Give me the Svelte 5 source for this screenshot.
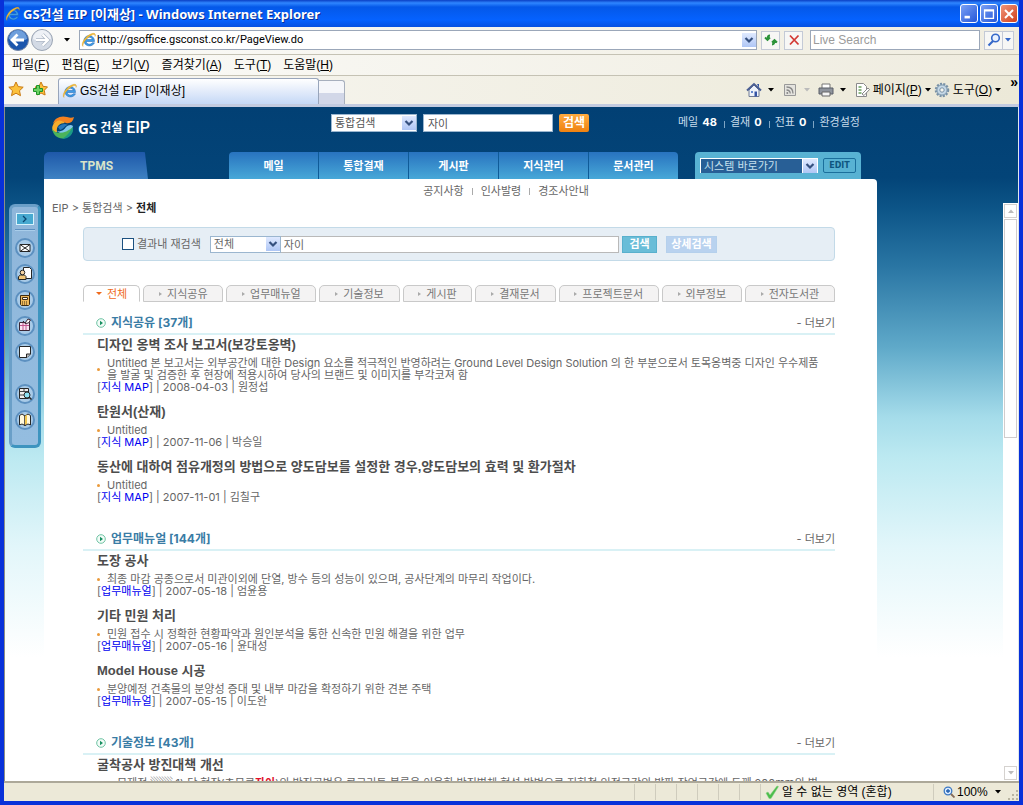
<script lang="ts">
	let scope = $state('통합검색');
	let keyword = $state('자이');
	let innerKeyword = $state('자이');
	let within = $state(false);
	let activeTab = $state('전체');

	const menus = [
		['파일', 'F'], ['편집', 'E'], ['보기', 'V'],
		['즐겨찾기', 'A'], ['도구', 'T'], ['도움말', 'H']
	];
	const counts = [['메일', '48'], ['결재', '0'], ['전표', '0']];
	const nav = ['메일', '통합결재', '게시판', '지식관리', '문서관리'];
	const subnav = ['공지사항', '인사발령', '경조사안내'];
	const tabs = ['전체', '지식공유', '업무매뉴얼', '기술정보', '게시판', '결재문서', '프로젝트문서', '외부정보', '전자도서관'];
	const dock = ['mail', 'contact', 'phone', 'gift', 'note', 'search', 'book'];

	const sections = [
		{
			title: '지식공유', count: 37, source: '지식 MAP',
			items: [
				{
					title: '디자인 옹벽 조사 보고서(보강토옹벽)',
					lines: [
						'Untitled 본 보고서는 외부공간에 대한 Design 요소를 적극적인 반영하려는 Ground Level Design Solution 의 한 부분으로서 토목옹벽중 디자인 우수제품',
						'을 발굴 및 검증한 후 현장에 적용시하여 당사의 브랜드 및 이미지를 부각코져 함'
					],
					date: '2008-04-03', author: '원정섭'
				},
				{ title: '탄원서(산재)', lines: ['Untitled'], date: '2007-11-06', author: '박승일' },
				{
					title: '동산에 대하여 점유개정의 방법으로 양도담보를 설정한 경우,양도담보의 효력 및 환가절차',
					lines: ['Untitled'], date: '2007-11-01', author: '김칠구'
				}
			]
		},
		{
			title: '업무매뉴얼', count: 144, source: '업무매뉴얼',
			items: [
				{
					title: '도장 공사',
					lines: ['최종 마감 공종으로서 미관이외에 단열, 방수 등의 성능이 있으며, 공사단계의 마무리 작업이다.'],
					date: '2007-05-18', author: '엄윤용'
				},
				{
					title: '기타 민원 처리',
					lines: ['민원 접수 시 정확한 현황파악과 원인분석을 통한 신속한 민원 해결을 위한 업무'],
					date: '2007-05-16', author: '윤대성'
				},
				{
					title: 'Model House 시공',
					lines: ['분양예정 건축물의 분양성 증대 및 내부 마감을 확정하기 위한 견본 주택'],
					date: '2007-05-15', author: '이도완'
				}
			]
		}
	];
</script>

{#snippet ie()}
	<svg class="ie" viewBox="0 0 16 16" aria-hidden="true">
		<path d="M13.500 9.500H5.200c.3 3 4.500 3.500 6 1.300h2.300C11.500 15.500 3 15 3 8.600 3 2 13.800 1.800 13.500 9.500ZM5.300 7.500h5.900C10.800 4.600 5.900 4.500 5.300 7.500Z" fill="#3f9be6" stroke="#1763b4" stroke-width=".5" />
		<path d="M2 14.500C-1 12 5 3 11 1.500c3-.8 4 .8 3 3 .2-2-1-2.500-3-1.500C6 5.500 1.500 11 2 14.500Z" fill="#f5bd38" stroke="#c98a12" stroke-width=".3" />
	</svg>
{/snippet}

{#snippet chevron()}
	<svg class="chev" viewBox="0 0 14 14" aria-hidden="true">
		<path d="M3.500 5 7 8.500 10.500 5" fill="none" stroke="#35507f" stroke-width="2.200" />
	</svg>
{/snippet}

{#snippet caret()}
	<svg class="caret" viewBox="0 0 6 4" aria-hidden="true"><path d="M0 0h6L3 3.500z" fill="currentColor" /></svg>
{/snippet}

<div class="window">
	<header class="titlebar">
		{@render ie()}
		<h1>GS건설 EIP [이재상] - Windows Internet Explorer</h1>
		<button class="win" aria-label="최소화"><svg viewBox="0 0 18 18"><path d="M4 12.500h6" stroke="#fff" stroke-width="3" /></svg></button>
		<button class="win" aria-label="최대화"><svg viewBox="0 0 18 18"><path d="M4 4.500h10v9.500H4zM4 5.500h10" fill="none" stroke="#fff" stroke-width="1.500" /></svg></button>
		<button class="win close" aria-label="닫기"><svg viewBox="0 0 18 18"><path d="m4.500 4.500 9 9m0-9-9 9" stroke="#fff" stroke-width="2.200" /></svg></button>
	</header>

	<div class="address">
		<button class="round" aria-label="뒤로">
			<svg viewBox="0 0 22 22">
				<circle cx="11" cy="11" r="10.500" fill="#1d57ad" stroke="#7889a7" />
				<path d="M2 10a9 9 0 0 1 18 0c-5 3-13 3-18 0Z" fill="#6f9fdc" />
				<path d="M10.500 5.500 5 11l5.500 5.500M5.500 11H17" fill="none" stroke="#fff" stroke-width="2.800" />
			</svg>
		</button>
		<button class="round" aria-label="앞으로">
			<svg viewBox="0 0 22 22">
				<circle cx="11" cy="11" r="10.500" fill="#d3dae5" stroke="#9ba5b4" />
				<path d="M2 10a9 9 0 0 1 18 0c-5 3-13 3-18 0Z" fill="#eef1f6" />
				<path d="m11.500 5.500 5.500 5.500-5.500 5.500M16.500 11H5" fill="none" stroke="#aeb8c6" stroke-width="3.600" />
				<path d="m11.500 5.500 5.500 5.500-5.500 5.500M16.500 11H5" fill="none" stroke="#fff" stroke-width="2.200" />
			</svg>
		</button>
		<button class="drop" aria-label="최근 페이지">{@render caret()}</button>
		<label class="url">
			{@render ie()}
			<input value="http://gsoffice.gsconst.co.kr/PageView.do" aria-label="주소" />
			{@render chevron()}
		</label>
		<button class="tool" aria-label="새로 고침">
			<svg viewBox="0 0 16 16"><path d="M7 3.500C4.500 3.500 4.500 5 4.500 7M2 5.500l2.500 2.500L7 5.500M9 12.500c2.500 0 2.500-1.500 2.500-3.500M9 10.500 11.500 8l2.500 2.500" fill="none" stroke="#2c9339" stroke-width="1.800" /></svg>
		</button>
		<button class="tool" aria-label="중지">
			<svg viewBox="0 0 16 16"><path d="m4 3.500 8.500 9M12.500 3.500 4 12.500" stroke="#d33a35" stroke-width="1.800" /></svg>
		</button>
		<input class="live" placeholder="Live Search" aria-label="Live Search" />
		<button class="tool find" aria-label="검색">
			<svg viewBox="0 0 16 16"><circle cx="9.500" cy="6" r="3.800" fill="#e8f1ff" stroke="#3568c9" stroke-width="1.600" /><path d="m7 9-4.500 4.500" stroke="#3568c9" stroke-width="2.200" /></svg>
		</button>
		<button class="tool more" aria-label="검색 옵션">{@render caret()}</button>
	</div>

	<nav class="menubar">
		{#each menus as [label, key]}
			<button>{label}(<u>{key}</u>)</button>
		{/each}
	</nav>

	<div class="tabbar">
		<button class="fav" aria-label="즐겨찾기 센터">
			<svg viewBox="0 0 16 16"><path d="m8 1 2.200 4.600 5 .6-3.700 3.500 1 5L8 12.200 3.500 14.700l1-5L.8 6.200l5-.6z" fill="#fcc13c" stroke="#c97b14" /></svg>
		</button>
		<button class="fav" aria-label="즐겨찾기에 추가">
			<svg viewBox="0 0 16 16"><path d="m9 1 2 4.300 4.500.6-3.200 3.400.8 4.700L9 12l-4 2 .7-5L3 6l4-.7z" fill="#fcc13c" stroke="#c97b14" /><path d="M4.500 4.500h3v3h3v3h-3v3h-3v-3h-3v-3h3z" fill="#6bd164" stroke="#1d9427" /></svg>
		</button>
		<button class="browsertab">{@render ie()} GS건설 EIP [이재상]</button>
		<button class="newtab" aria-label="새 탭"></button>
		<div class="commands">
			<button class="wide" aria-label="홈">
				<svg viewBox="0 0 16 16"><path d="M3 8v6.500h10V8L8 3z" fill="#eef2fa" stroke="#6f7b95" /><path d="M1 8.500 8 2l7 6.500" fill="none" stroke="#4b5f93" stroke-width="2" /><path d="M11 2h2v4M8.500 9.500H11v5H8.500z" fill="#3453a4" /><path d="M5 9h2v2H5z" fill="#6689cd" /></svg>
				{@render caret()}
			</button>
			<button class="wide off" aria-label="피드">
				<svg viewBox="0 0 16 16"><path d="M2.500 2.500h11v11h-11z" fill="#e4e3de" stroke="#999" /><path d="M4.500 5c4 0 6.500 2.500 6.500 6.500M4.500 8c2.500 0 3.700 1.300 3.700 3.500" fill="none" stroke="#888" stroke-width="1.300" /><circle cx="5.300" cy="11" r="1" fill="#888" /></svg>
				{@render caret()}
			</button>
			<button class="wide" aria-label="인쇄">
				<svg viewBox="0 0 16 16"><path d="M4 2h8v5H4z" fill="#fff" stroke="#777" /><path d="M1 6h14v6H1z" fill="#8f949d" stroke="#5a5f69" /><path d="M4 10h8v4H4z" fill="#f4f4f4" stroke="#666" /></svg>
				{@render caret()}
			</button>
			<button>
				<svg viewBox="0 0 16 16"><path d="M2.500 1.500h7l3 3v10h-10z" fill="#fff" stroke="#8a8a8a" /><path d="M4.500 5h3M4.500 8h3M4.500 11h3" stroke="#68a05b" stroke-width="1.500" /><path d="m8 12 6-6 1.500 1.500-5.500 6z" fill="#fff" stroke="#888" /></svg>
				<span>페이지(<u>P</u>)</span>{@render caret()}
			</button>
			<button>
				<svg viewBox="0 0 16 16"><circle cx="8" cy="8" r="6" fill="#b8ccdc" stroke="#7891a6" stroke-width="2.500" stroke-dasharray="2 1.200" /><circle cx="8" cy="8" r="5" fill="#c6d9e8" stroke="#88a1b4" /><circle cx="8" cy="8" r="2.200" fill="#f6f6ef" stroke="#7891a6" /></svg>
				<span>도구(<u>O</u>)</span>{@render caret()}
			</button>
			<b>»</b>
		</div>
	</div>

	<div class="page">
		<div class="top">
			<a class="logo" href="#home">
				<svg viewBox="0 0 24 24" aria-hidden="true">
					<path d="M2 8C3 2 10-1 16 1c3 1 5 1 7 0-1 5-4 7-8 6C10 5 5 4 2 8Z" fill="#f58220" />
					<path d="M2 9c3-6 9-5 12-2-5 0-9 3-8 9-4 2-6-3-4-7Z" fill="#f9ad2b" />
					<path d="M5 14c2 3 8 1 10-3 2-2 5-3 7-1-2 8-12 10-17 4Z" fill="#81c6ec" />
					<path d="M7 11c3-3 7-4 10-2-3 0-4 4-8 5Z" fill="#2a77ba" />
					<path d="M1 12c2 6 12 7 21-1 1 13-19 17-21 1Z" fill="#4bb35c" />
					<path d="M22 11c1 8-5 12-11 12 5-3 7-6 11-12Z" fill="#1a9a87" />
				</svg>
				<b>GS</b><span>건설</span><em>EIP</em>
			</a>
			<form class="gsearch" onsubmit={(e) => e.preventDefault()}>
				<span class="pick">
					<select bind:value={scope} aria-label="검색 범위"><option>통합검색</option></select>
					{@render chevron()}
				</span>
				<input bind:value={keyword} aria-label="검색어" />
				<button>검색</button>
			</form>
			<ul class="counts">
				{#each counts as [label, n]}
					<li><a href="#{label}">{label} <b>{n}</b></a></li>
				{/each}
				<li><a href="#settings">환경설정</a></li>
			</ul>
		</div>

		<div class="gnb">
			<a class="tpms" href="#tpms">TPMS</a>
			<nav>
				{#each nav as label}
					<a href="#{label}">{label}</a>
				{/each}
			</nav>
			<div class="system">
				<span class="pick">
					<select aria-label="시스템 바로가기"><option>시스템 바로가기</option></select>
					{@render chevron()}
				</span>
				<button>EDIT</button>
			</div>
		</div>

		<div class="subnav">
			{#each subnav as label}
				<a href="#{label}">{label}</a>
			{/each}
		</div>

		<div class="frame">
			<aside>
				<div class="dock">
					<button class="toggle" aria-label="펼치기"><svg viewBox="0 0 16 10"><path d="m6 2 3 3-3 3" fill="none" stroke="#0a456e" stroke-width="1.300" /></svg></button>
					<hr />
					{#each dock as name}
						<button class={name} aria-label={name}>
							<svg viewBox="0 0 22 22">
								<circle cx="11" cy="11" r="9" fill="#a9cbe8" stroke="#5c90c0" stroke-width="2" />
								{#if name === 'mail'}
									<path d="M6 7.500h10v7H6zM6 7.500l10 7m0-7-10 7" fill="#fff" stroke="#262626" />
								{:else if name === 'contact'}
									<path d="M9.500 4.500h6l2 2v9h-8z" fill="#fff" stroke="#262626" /><path d="M4.500 16.500v-3l2-1.500h4l1.500 1.500v3z" fill="#f3c879" stroke="#262626" /><circle cx="8.500" cy="9.500" r="2.300" fill="#f7d6a4" stroke="#262626" />
								{:else if name === 'phone'}
									<path d="M15.500 6.500v-3M6.500 6.500h9v9l-1 1h-7l-1-1z" fill="#eeb95c" stroke="#3d2c14" /><path d="M8.500 8.500h5v2h-5z" fill="#fff" stroke="#3d2c14" /><path d="M8 13h6M8 15h6" stroke="#3d2c14" stroke-dasharray="1 1" />
								{:else if name === 'gift'}
									<path d="M5.500 7.500h10v8h-10z" fill="#f8e4f2" stroke="#3a2534" /><path d="M6 10.500h9M9 8v7M12 8v7" stroke="#c2568f" /><path d="m11 8 3-4 2.500 1-2 3-3.500.5L9 6z" fill="#fff" stroke="#3a2534" />
								{:else if name === 'note'}
									<path d="M5.500 5.500h11v7.500L13 16.500H5.500z" fill="#fff" stroke="#262626" /><path d="M12.500 16.500V13h4" fill="#bbb" stroke="#262626" />
								{:else if name === 'search'}
									<path d="M5.500 5.500h9v10h-9z" fill="#eee" stroke="#262626" /><path d="M6 8.500h8M6 12h4M10 6v3" stroke="#444" /><circle cx="13" cy="12" r="3" fill="#8fe2f3" stroke="#262626" /><path d="m15 14 2.500 2.500" stroke="#262626" stroke-width="1.500" />
								{:else}
									<path d="M5.500 6.500 8 5l3 2v9.500L8 15l-2.500 1zM11 7l3-2 2.500 1.500V16L14 15l-3 1.500z" fill="#fff8dd" stroke="#262626" /><path d="m11 7 2-1.500v9.200l-2 1.300z" fill="#f1c64e" />
								{/if}
							</svg>
						</button>
					{/each}
				</div>
			</aside>

			<main>
				<p class="crumb">EIP &gt; 통합검색 &gt; <b>전체</b></p>

				<form class="filter" onsubmit={(e) => e.preventDefault()}>
					<label><input type="checkbox" bind:checked={within} />결과내 재검색</label>
					<span class="pick">
						<select aria-label="분류"><option>전체</option></select>
						{@render chevron()}
					</span>
					<input class="word" bind:value={innerKeyword} aria-label="재검색어" />
					<button>검색</button>
					<button type="button" class="detail">상세검색</button>
				</form>

				<div class="tabs" role="tablist">
					{#each tabs as tab}
						<button role="tab" aria-selected={tab === activeTab} class:active={tab === activeTab} onclick={() => (activeTab = tab)}>
							<i></i>{tab}
						</button>
					{/each}
				</div>

				{#snippet head(title: string, count: number)}
					<div class="head">
						<svg viewBox="0 0 10 10" aria-hidden="true"><circle cx="5" cy="5" r="4.300" fill="#f2fcf7" stroke="#6fc3a4" /><path d="M4 2.700 7 5 4 7.300z" fill="#178f61" /></svg>
						<h2>{title} [{count}개]</h2>
						<a href="#more">- 더보기</a>
					</div>
				{/snippet}

				{#each sections as section}
					<section>
						{@render head(section.title, section.count)}
						{#each section.items as item}
							<article>
								<h3>{item.title}</h3>
								<div class="desc">
									<div>{#each item.lines as line}<p>{line}</p>{/each}</div>
								</div>
								<p class="meta">[<a href="#source">{section.source}</a>] | {item.date} | {item.author}</p>
							</article>
						{/each}
					</section>
				{/each}

				<section>
					{@render head('기술정보', 43)}
					<article>
						<h3>굴착공사 방진대책 개선</h3>
						<div class="desc plain">
							<p>문제점 ▒▒ 1) 당 현장(초무로<strong>자이</strong>)의 방진공법은 콘크리트 블록을 이용한 방진벽체 형성 방법으로 지하철 인접구간의 발파 작업구간에 두께 200mm의 벽</p>
						</div>
					</article>
				</section>
			</main>

			<div class="scroll">
				<button class="up" aria-label="위로">{@render caret()}</button>
				<div class="thumb"></div>
				<button class="down" aria-label="아래로">{@render caret()}</button>
			</div>
		</div>
	</div>

	<footer>
		<div class="cells"><i></i><i></i><i></i><i></i><i></i><i></i></div>
		<div class="zone">
			<svg viewBox="0 0 14 14" aria-hidden="true"><path d="m1 8 2-1 2 3 7-9 1.500.5L6 13.500H4z" fill="#4bbd4b" stroke="#86cf83" stroke-width=".5" /></svg>
			알 수 없는 영역 (혼합)
		</div>
		<button class="zoom">
			<svg viewBox="0 0 12 12" aria-hidden="true"><circle cx="5" cy="5" r="3.800" fill="#dcecff" stroke="#3b78c3" stroke-width="1.300" /><path d="M3 5h4M5 3v4" stroke="#1c5cb0" stroke-width="1.300" /><path d="m8 8 3.500 3.500" stroke="#866b57" stroke-width="1.800" /></svg>
			<span>100%</span>{@render caret()}
		</button>
		<svg class="grip" viewBox="0 0 12 12" aria-hidden="true"><path d="M9 1h2v2H9zM9 5h2v2H9zM5 5h2v2H5zM9 9h2v2H9zM5 9h2v2H5zM1 9h2v2H1z" fill="#b8b4a2" /></svg>
	</footer>
</div>

<style>
	:global(body) { margin: 0; }
	.window {
		box-sizing: border-box; height: 100vh; overflow: hidden;
		display: flex; flex-direction: column;
		border: solid #0831d9; border-width: 0 4px 4px;
		background: #ece9d8; color: #000;
		font: 12px/16px "Liberation Sans", "Noto Sans CJK KR", sans-serif;
	}
	.window :global(*) { box-sizing: border-box; }
	button, input, select { font: inherit; color: inherit; margin: 0; padding: 0; border-radius: 0; }
	button { border: 0; background: none; white-space: nowrap; }
	select { appearance: none; outline: 0; }
	input { outline: 0; min-width: 0; }
	a { color: inherit; text-decoration: none; }
	h1, h2, h3, p, ul { margin: 0; padding: 0; }
	svg { display: block; flex-shrink: 0; }
	.ie { width: 16px; height: 16px; }
	.caret { width: 6px; height: 4px; }
	.chev { width: 14px; height: 14px; background: linear-gradient(#dfe9ff, #afc6f5); }

	.titlebar {
		display: flex; align-items: center; gap: 2px; height: 27px; flex-shrink: 0;
		margin: 0 -4px; padding: 0 5px;
		background: linear-gradient(#0a3fc4, #2f86ff 3px, #0458e8 7px, #0562ff 20px, #0650e0);
	}
	.titlebar h1 {
		flex: 1; color: #fff; font-weight: bold; font-size: 13px; line-height: 16px;
		font-family: "Noto Sans", "Noto Sans CJK KR", sans-serif;
		text-shadow: 1px 1px #0a2f94; white-space: nowrap;
	}
	.win { width: 18px; height: 19px; border: 1px solid #fff; border-radius: 3px; background: linear-gradient(135deg, #7aa1f5, #2456d8); }
	.win svg { width: 16px; height: 16px; }
	.win.close { background: linear-gradient(135deg, #f1957b, #d0401b); }

	.address {
		display: flex; align-items: center; height: 28px; flex-shrink: 0; padding: 0 5px 1px 3px;
		border-bottom: 1px solid #c5c2b4; background: linear-gradient(90deg, #fbfbf9, #f0ede0);
	}
	.round { width: 24px; height: 22px; }
	.round svg { width: 22px; height: 22px; }
	.drop { width: 24px; display: grid; place-items: center; }
	.url {
		flex: 1; display: flex; align-items: center; gap: 0; height: 20px; margin-right: 4px; padding: 0 0 0 1px;
		border: 1px solid #9ba7b9; background: #fff;
	}
	.url input { flex: 1; border: 0; font: 11px/16px Roboto, sans-serif; }
	.tool { display: grid; place-items: center; width: 19px; height: 19px; margin-right: 4px; border: 1px solid #c4cad6; background: #f7f7f5; }
	.tool svg { width: 16px; height: 16px; }
	.live { width: 170px; height: 20px; margin: 0 4px 0 3px; padding: 0 2px; border: 1px solid #9ba7b9; background: #fff; }
	.live::placeholder { color: #9b9b9b; }
	.tool.find { margin: 0; }
	.tool.more { width: 11px; margin: 0; border-left: 0; color: #3568c9; }
	.tool :global(.caret) { width: 6px; height: 4px; }

	.menubar {
		display: flex; gap: 12px; height: 21px; flex-shrink: 0; padding: 0 8px;
		border-bottom: 1px solid #c5c2b4; background: linear-gradient(90deg, #fbfbf9, #efecdf);
	}

	.tabbar {
		display: flex; align-items: flex-end; height: 31px; flex-shrink: 0; padding-left: 4px;
		border-bottom: 3px solid #c3cbe0; background: linear-gradient(90deg, #f8f7f3, #ece9d8);
	}
	.fav { width: 24px; height: 26px; padding-bottom: 4px; }
	.fav svg { width: 16px; height: 16px; }
	.browsertab {
		display: flex; align-items: center; gap: 2px; flex: 0 1 261px; height: 26px; margin-left: 2px; padding: 0 3px 2px;
		border: 1px solid #98a5bb; border-bottom: 0; border-radius: 3px 3px 0 0;
		background: linear-gradient(#fff, #e8effb 40%, #c5d8f6);
	}
	.newtab {
		width: 26px; height: 24px; border: 1px solid #a7afbd; border-bottom: 0; border-left: 0; border-radius: 0 3px 0 0;
		background: linear-gradient(#f5f6fa 50%, #d2d7e8 50%);
	}
	.commands { display: flex; align-items: center; gap: 3px; height: 28px; margin-left: auto; padding: 0 1px; }
	.commands button { display: flex; align-items: center; gap: 3px; }
	.commands .wide { gap: 6px; margin-right: 5px; }
	.commands button > :global(svg:first-child) { width: 16px; height: 16px; }
	.commands .off { color: #bbb; }
	.commands b { align-self: flex-start; margin-left: 6px; font-size: 14px; line-height: 12px; }

	.page {
		flex: 1; min-height: 0; display: flex; flex-direction: column; overflow: hidden;
		border-left: 1px solid #8d8f85; border-right: 1px solid #dfe6ee;
		background: linear-gradient(#024074 0, #034478 70px, #0c5487 100px, #2a76a4 160px, #5fa9c9 240px, #a5dcea 310px, #bce9f1 350px, #e2f6fa 440px, #fff 550px);
		font-family: Inter, "Noto Sans CJK KR", sans-serif; font-size: 11px;
	}
	.top { display: flex; align-items: flex-start; height: 45px; flex-shrink: 0; padding: 7px 0 0 46px; }
	.logo { display: flex; align-items: center; height: 28px; width: 280px; color: #fff; }
	.logo svg { width: 24px; height: 24px; margin-right: 3px; }
	.logo b { margin-right: 3px; font: bold 15px/20px "Open Sans", sans-serif; }
	.logo span { margin-right: 4px; font-size: 12px; font-weight: bold; }
	.logo em { font: 500 16px/20px Roboto, sans-serif; }
	.gsearch { display: flex; gap: 6px; color: #555; }
	.pick { display: grid; align-items: center; background: #fff; border: 1px solid #9bb6cf; }
	.pick select { grid-area: 1 / 1; width: 100%; height: 100%; padding: 0 3px; border: 0; background: none; line-height: 14px; }
	.pick :global(.chev) { grid-area: 1 / 1; justify-self: end; pointer-events: none; }
	.gsearch .pick { width: 86px; height: 18px; }
	.gsearch input { width: 130px; height: 18px; padding: 0 4px; border: 1px solid #9bb6cf; background: #fff; }
	.gsearch button { width: 30px; height: 18px; border-radius: 2px; background: linear-gradient(#ffab3f, #ef8211); color: #fff; font-size: 12px; font-weight: bold; }
	.counts { display: flex; margin-left: 89px; list-style: none; color: #c8dceb; white-space: nowrap; }
	.counts b { margin-left: 1px; color: #fff; }
	.counts li + li { display: flex; align-items: center; }
	.counts li + li::before { content: ""; height: 7px; margin: 4px 5px 0 7px; border-left: 1px solid #7ea5c4; }

	.gnb { display: flex; height: 27px; flex-shrink: 0; padding-left: 39px; color: #fff; }
	.tpms {
		width: 104px; padding: 6px 0 0 36px; color: #d9e4c9; font: bold 12px/16px Roboto, sans-serif;
		background: linear-gradient(#1e58a9, #3e82c3); border-radius: 5px 5px 0 0;
		clip-path: polygon(0 0, 97% 0, 100% 100%, 0 100%);
	}
	.gnb nav { display: flex; width: 449px; margin-left: 81px; border-radius: 4px 4px 0 0; overflow: hidden; background: linear-gradient(#2873bf, #48a8d8); }
	.gnb nav a { flex: 1; text-align: center; line-height: 29px; font-weight: bold; }
	.gnb nav a + a { border-left: 1px solid #0f5b98; }
	.system { display: flex; align-items: center; gap: 5px; width: 166px; margin-left: 17px; padding: 0 5px; border-radius: 4px 4px 0 0; background: #58b2d3; }
	.system .pick { width: 118px; height: 15px; border: 1px solid #fff; }
	.system select { width: 101px; background: #285f96; color: #c5e0ef; line-height: 11px; }
	.system button { width: 33px; height: 15px; border: 1px solid #1b6f9c; border-radius: 2px; color: #0f5680; font: bold 8px/12px "DejaVu Sans", sans-serif; }

	.subnav {
		display: flex; align-items: center; justify-content: center; height: 24px; flex-shrink: 0;
		width: 833px; max-width: calc(100% - 39px); margin-left: 39px; padding-left: 91px;
		border-top-right-radius: 4px; background: #fff; color: #666;
	}
	.subnav a + a { display: flex; align-items: center; }
	.subnav a + a::before { content: ""; height: 7px; margin: 0 8px; border-left: 1px solid #aaa; }

	.frame { flex: 1; min-height: 0; display: flex; }
	aside { width: 39px; flex-shrink: 0; padding: 1px 3px 0 4px; }
	.dock {
		display: flex; flex-direction: column; align-items: center; gap: 4px; height: 244px; padding-top: 6px;
		border: 3px solid #6a9fc8; border-right-color: #3d94bf; border-bottom-color: #3d94bf; border-radius: 6px;
		background: linear-gradient(#8fb6da, #94bde0);
	}
	.dock button svg { width: 22px; height: 22px; }
	.dock .toggle { width: 18px; height: 12px; border: 1px solid #d6f2fc; background: #47a9d0; }
	.dock .toggle svg { width: 16px; height: 10px; }
	.dock hr { width: 20px; height: 2px; margin: 0 0 2px; border: 0; border-top: 1px solid #5a8fc0; border-bottom: 1px solid #a9cdea; }
	.dock .search { margin-top: 16px; }

	main { width: 833px; flex: 0 1 auto; min-width: 0; padding: 0 42px 0 39px; background: #fff; color: #666; white-space: nowrap; }
	.crumb { height: 24px; margin-left: -31px; line-height: 11px; }
	.crumb b { color: #222; }

	.filter {
		display: flex; align-items: center; height: 34px; padding: 0 117px 0 38px;
		border: 1px solid #c3dae8; border-radius: 4px; background: #e6eef5;
	}
	.filter label { display: flex; align-items: center; margin-right: 9px; }
	.filter input[type="checkbox"] { appearance: none; width: 12px; height: 12px; margin-right: 3px; border: 1px solid #1c5180; background: #fff; }
	.filter input[type="checkbox"]:checked { background: #1c5180; }
	.filter .pick { width: 71px; height: 17px; }
	.filter .word { flex: 1; height: 17px; margin-right: 3px; padding: 0 3px; border: 1px solid #b9b9b9; border-left: 0; background: #fff; }
	.filter button { width: 35px; height: 17px; border: 1px solid #58b0cd; background: #69bdd8; color: #fff; line-height: 14px; font-weight: bold; }
	.filter .detail { width: 51px; margin-left: 9px; border-color: #b5d0ec; background: #b9d2ef; }

	.tabs { display: flex; gap: 3px; margin: 24px 0 10px; }
	.tabs button {
		display: flex; align-items: center; justify-content: center; gap: 5px; flex: 1 1 auto; height: 17px; padding: 0 9px;
		border: 1px solid #c9c9c9; border-radius: 5px 5px 0 0; background: #f4f3f3; color: #777;
	}
	.tabs i { border: solid transparent; border-width: 2px 0 2px 3px; border-left-color: #aaa; }
	.tabs .active { flex-grow: 0; padding: 0 12px; border-bottom-color: #fff; background: #fff; color: #ef6a1c; }
	.tabs .active i { border-width: 3px 3px 0; border-color: #ef6a1c transparent transparent; }

	section { margin-bottom: 25px; }
	.head { display: flex; align-items: center; gap: 5px; height: 23px; margin-bottom: 2px; padding-left: 13px; border-bottom: 2px solid #d9f1f5; }
	.head svg { width: 10px; height: 10px; }
	.head h2 { flex: 1; color: #3a7ca5; font-size: 12px; font-weight: bold; }
	article { margin-bottom: 11px; padding-left: 14px; }
	article:last-child { margin-bottom: 0; }
	h3 { margin-bottom: 4px; color: #4d4d4d; font-family: "Liberation Sans", "Noto Sans CJK KR", sans-serif; font-size: 13px; line-height: 16px; }
	.desc { display: flex; align-items: center; gap: 7px; line-height: 12px; }
	.desc::before { content: ""; flex-shrink: 0; width: 3px; height: 3px; border-radius: 2px; background: #eb9a3a; }
	.desc.plain { padding-left: 20px; gap: 0; }
	.desc.plain::before { display: none; }
	.desc strong { color: #e0112b; }
	.meta { line-height: 12px; }
	.meta a { color: #0000f0; }

	.scroll { display: flex; flex-direction: column; gap: 1px; width: 15px; flex-shrink: 0; margin-left: auto; padding: 1px; background: #fff; }
	.scroll button { display: grid; place-items: center; height: 14px; border: 1px solid #d5d2cf; color: #bbb; }
	.up :global(.caret) { transform: rotate(180deg); }
	.thumb { height: 219px; border: 1px solid #d0cdcd; }
	.scroll .down { margin-top: auto; }

	footer { display: flex; align-items: center; height: 20px; flex-shrink: 0; border-top: 2px solid #aca899; background: #ece9d8; white-space: nowrap; }
	.cells { display: flex; align-self: stretch; margin: 1px 0 1px auto; }
	.cells i { width: 21px; border-left: 1px solid #cfccbd; }
	.zone { display: flex; align-items: center; gap: 3px; width: 173px; padding-left: 4px; border-left: 1px solid #cfccbd; }
	.zone svg { width: 14px; height: 14px; }
	.zoom { display: flex; align-items: center; gap: 2px; width: 74px; padding-left: 9px; border-left: 1px solid #cfccbd; }
	.zoom svg { width: 12px; height: 12px; }
	.zoom span { margin-right: 5px; }
	.zoom :global(.caret) { width: 6px; height: 4px; }
	.grip { width: 12px; height: 12px; align-self: flex-end; }
</style>
